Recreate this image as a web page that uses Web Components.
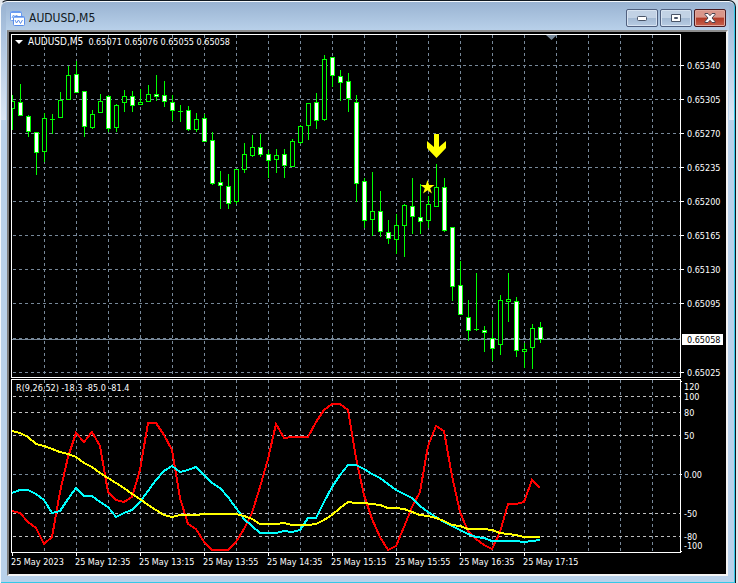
<!DOCTYPE html>
<html lang="en">
<head>
<meta charset="utf-8">
<title>AUDUSD,M5</title>
<style>
    body {
        margin: 0;
        background: #e4e8ec;
        font-family: "DejaVu Sans Condensed", "DejaVu Sans", sans-serif;
    }
</style>
</head>
<body>
<chart-window>
    <span slot="title">AUDUSD,M5</span>
    <market-chart>
        <price-pane slot="price"><span slot="symbol">AUDUSD,M5</span>&nbsp; 0.65071 0.65076 0.65055 0.65058</price-pane>
        <price-axis slot="price-axis" current="0.65058"></price-axis>
        <oscillator-pane slot="oscillator">R(9,26,52) -18.3 -85.0 -81.4</oscillator-pane>
        <oscillator-axis slot="oscillator-axis"></oscillator-axis>
        <time-axis slot="time"></time-axis>
    </market-chart>
</chart-window>

<script>
const STEP = 8;
const GRID = "#778899";
const LEVEL = "#c0c0c0";

// kind (f = falling, r = rising, d = flat), high, body top, body bottom, low
const CANDLES = [
    "r 60 66 74 95", "f 49 67 81 81", "f 80 81 97 102", "f 97 97 118 140", "r 78 83 117 127",
    "d 79 84 85 99", "r 57 65 83 83", "r 31 40 65 65", "f 26 39 58 58", "f 56 56 92 102",
    "r 75 79 93 94", "r 59 66 78 78", "f 60 61 94 97", "r 69 70 93 97", "r 55 61 68 77",
    "f 56 61 71 77", "r 54 67 70 70", "r 50 59 67 67", "f 40 59 62 66", "f 46 60 67 72",
    "f 60 67 76 86", "d 70 76 77 87", "f 71 75 95 96", "r 78 84 95 97", "f 79 83 107 107",
    "f 97 105 149 150", "f 136 147 151 174", "f 139 151 169 174", "r 134 134 167 169", "r 108 119 135 138",
    "r 100 112 121 122", "f 99 112 120 122", "f 115 119 126 143", "r 114 120 125 138", "f 114 119 131 143",
    "r 104 106 132 132", "r 90 91 108 109", "r 68 68 91 105", "f 58 67 86 94", "r 20 24 85 86",
    "f 22 22 41 52", "f 35 41 48 66", "f 38 46 64 77", "f 60 67 149 167", "f 143 146 186 193",
    "r 137 176 185 201", "f 156 176 197 202", "f 185 197 204 209", "r 179 190 205 219", "r 169 170 191 222",
    "f 143 171 182 199", "f 149 182 187 199", "r 161 169 186 193", "r 129 152 172 172", "f 143 152 196 197",
    "f 192 192 252 266", "f 226 250 280 280", "f 265 282 296 306", "d 238 294 295 296", "f 291 295 298 317",
    "f 285 303 314 326", "r 260 265 310 320", "r 238 264 267 287", "f 262 266 316 322", "r 308 314 317 333",
    "r 289 293 313 334", "f 287 292 305 308"
];

const LINES = [
    ["#ff0000", [131, 133, 142, 148, 164, 157, 112, 77, 53, 62, 52, 66, 112, 120, 122, 117, 90, 43, 43, 55, 70, 118, 144, 149,
        162, 170, 170, 170, 162, 149, 133, 107, 79, 44, 58, 57, 57, 57, 42, 30, 24, 24, 30, 78, 115, 139, 157, 170, 166,
        147, 127, 112, 66, 46, 51, 96, 132, 151, 159, 165, 169, 152, 124, 124, 122, 100, 108]],
    ["#00ffff", [113, 110, 110, 114, 120, 133, 131, 119, 108, 116, 116, 122, 127, 137, 133, 130, 122, 111, 100, 91, 86, 92, 90, 87,
        95, 103, 108, 117, 128, 139, 146, 153, 153, 153, 151, 152, 150, 138, 138, 122, 107, 95, 85, 85, 89, 94, 98, 104, 110,
        114, 118, 126, 132, 137, 142, 146, 150, 154, 157, 158, 161, 161, 161, 161, 162, 161, 160]],
    ["#ffff00", [51, 53, 57, 64, 66, 69, 72, 74, 77, 83, 87, 93, 98, 103, 108, 114, 119, 125, 130, 135, 137, 135, 135, 135,
        134, 134, 134, 134, 134, 136, 139, 144, 144, 144, 143, 145, 145, 145, 144, 140, 135, 128, 122, 123, 123, 124, 125, 128,
        128, 129, 132, 135, 136, 138, 141, 145, 146, 149, 149, 149, 150, 153, 154, 155, 157, 157, 157]]
];

function hline(y, color) {
    return `<line x1="0" x2="100%" y1="${y + .5}" y2="${y + .5}" stroke="${color}" stroke-dasharray="3 3" stroke-dashoffset="-1"/>`;
}

function vlines() {
    let out = "";
    for (let i = 1; i < 80; i++) {
        const x = i * 32 + .5;
        out += `<line x1="${x}" x2="${x}" y1="0" y2="100%" stroke="${GRID}" stroke-dasharray="3 3"/>`;
    }
    return out;
}

class ChartWindow extends HTMLElement {
    constructor() {
        super();
        this.attachShadow({ mode: "open" });
        this.shadowRoot.innerHTML = this._getTemplate();
    }

    _getTemplate() {
        return `
        <style>
            :host {
                display: flex;
                flex-direction: column;
                box-sizing: border-box;
                min-height: 100vh;
                margin-right: 2px;
                padding: 0 7px 7px 6px;
                border: 1px solid #101820;
                border-left-color: #f4f8fc;
                border-radius: 7px 7px 0 0;
                box-shadow: inset -1px -1px 0 #35c8e8, inset 0 1px 0 #f4f8fc;
                background:
                    linear-gradient(#98b2d1, #aac2de 30px, #dbe7f4 119px) left top / 5px 119px no-repeat,
                    linear-gradient(#98b2d1, #aac2de 30px, #dbe7f4 119px) right 1px top / 5px 119px no-repeat,
                    linear-gradient(#98b2d1, #b9d1ea 30px) #b9d1ea;
            }

            header {
                display: flex;
                align-items: center;
                gap: 4px;
                height: 29px;
                padding: 5px 2px 0 3px;
                box-sizing: border-box;
            }

            h1 {
                flex: 1;
                margin: 0;
                font-size: 12px;
                font-weight: normal;
                line-height: 16px;
                color: #101820;
            }

            nav {
                display: flex;
                gap: 2px;
            }

            button {
                display: grid;
                place-items: center;
                width: 32px;
                height: 18px;
                padding: 0;
                border: 1px solid #50607f;
                border-radius: 2px;
                box-shadow: inset 0 0 0 1px #d7e3f1;
                background: linear-gradient(#c2d2e5 50%, #a3b9d3 50%, #b8cce3);
            }

            button.close {
                border-color: #4a1a20;
                box-shadow: inset 0 0 0 1px #e0a79c;
                background: linear-gradient(#d9968a 45%, #b13a26 50%, #c8614d);
            }

            .client {
                flex: 1;
                display: flex;
                border: solid;
                border-width: 2px;
                border-color: #8c8c8c #f4f4f4 #f4f4f4 #7c7c7c;
            }

            ::slotted(market-chart) {
                flex: 1;
            }
        </style>

        <header>
            <svg width="15" height="15" viewBox="0 0 15 15" aria-hidden="true">
                <rect x=".5" y=".5" width="11" height="9" rx="1" fill="#fff" stroke="#6a9cf0"/>
                <path d="M1 1.500h10" stroke="#6c9cf0"/>
                <path d="M2 7l1.500-3 1.500 2 1.500-2 1.500 2" fill="none" stroke="#6a9cf0"/>
                <rect x="3.500" y="5.500" width="11" height="9" rx="1" fill="#fff" stroke="#5a8eea"/>
                <path d="M4 6.500h10" stroke="#8db4f6"/>
                <path d="M5 9l1.500 3 2-3 2 3.500 2-3.500" fill="none" stroke="#5a8eea"/>
            </svg>
            <h1><slot name="title"></slot></h1>
            <nav>
                <button type="button" aria-label="Minimize">
                    <svg width="12" height="6" viewBox="0 0 12 6"><rect x="1.500" y="1.500" width="9" height="4" rx="1" fill="#fff" stroke="#4a5568"/></svg>
                </button>
                <button type="button" aria-label="Maximize">
                    <svg width="12" height="10" viewBox="0 0 12 10"><path d="M1.500 1.500h9v7h-9zM4.500 4.500h3v1h-3z" fill="#fff" fill-rule="evenodd" stroke="#4a5568"/></svg>
                </button>
                <button type="button" class="close" aria-label="Close">
                    <svg width="12" height="10" viewBox="0 0 12 10"><path d="M1 .5h3l2 2.200 2-2.200h3v1l-3 3.500 3 3.500v1h-3l-2-2.200-2 2.200h-3v-1l3-3.500-3-3.500z" fill="#fff" stroke="#4a4450"/></svg>
                </button>
            </nav>
        </header>
        <div class="client"><slot></slot></div>
        `;
    }
}

class MarketChart extends HTMLElement {
    constructor() {
        super();
        this.attachShadow({ mode: "open" });
        this.shadowRoot.innerHTML = `
        <style>
            :host {
                display: grid;
                grid-template-columns: minmax(0, 1fr) 45px;
                grid-template-rows: minmax(344px, 1fr) 174px 20px;
                row-gap: 1px;
                padding: 2px 0 0 2px;
                background: #000;
                color: #fff;
                font-size: 9px;
                line-height: 12px;
            }
        </style>
        <slot name="price"></slot>
        <slot name="price-axis"></slot>
        <slot name="oscillator"></slot>
        <slot name="oscillator-axis"></slot>
        <slot name="time"></slot>
        `;
    }
}

const PANE_STYLE = `
    :host {
        display: grid;
        border: 1px solid #fff;
        overflow: hidden;
    }

    svg, .caption {
        grid-area: 1 / 1;
    }

    svg {
        width: 100%;
        height: 100%;
    }

    .caption {
        align-self: start;
        white-space: nowrap;
        z-index: 1;
    }
`;

const AXIS_STYLE = `
    :host {
        display: grid;
    }

    svg {
        width: 100%;
        height: 100%;
        overflow: visible;
    }

    text {
        fill: #fff;
        font-size: 9px;
    }
`;

class PricePane extends HTMLElement {
    constructor() {
        super();
        this.attachShadow({ mode: "open" });
        this.shadowRoot.innerHTML = this._getTemplate();
    }

    _getCandles() {
        return CANDLES.map((row, i) => {
            const [kind, ...values] = row.split(" ");
            const [high, top, bottom, low] = values.map(Number);
            const x = i * STEP;
            const wick = `<path d="M${x + .5} ${high}V${top}M${x + .5} ${bottom}V${low}" stroke="#0f0"/>`;
            if (kind === "d") {
                return `<rect x="${x}" y="${high}" width="1" height="${low - high}" fill="#0f0"/>
                    <rect x="${x - 2}" y="${top}" width="5" height="1" fill="#0f0"/>`;
            }
            const fill = kind === "f" ? "#fff" : "#000";
            return wick + `<rect x="${x - 1.5}" y="${top + .5}" width="4" height="${bottom - top - 1}" fill="${fill}" stroke="#0f0"/>`;
        }).join("");
    }

    _getTemplate() {
        return `
        <style>
            ${PANE_STYLE}
            .caption {
                display: flex;
                align-items: center;
                gap: 5px;
                padding: 1px 3px;
            }

            .caption svg {
                width: 8px;
                height: 4px;
            }

            ::slotted([slot="symbol"]) {
                font-size: 10px;
            }
        </style>
        <div class="caption">
            <svg viewBox="0 0 8 4"><path d="M0 0h8l-4 4z" fill="#fff"/></svg>
            <span><slot name="symbol"></slot><slot></slot></span>
        </div>
        <svg>
            ${vlines()}
            ${[30, 64, 98, 132, 166, 200, 234, 268, 303, 337].map(y => hline(y, GRID)).join("")}
            <rect y="304" width="100%" height="1" fill="${GRID}"/>
            ${this._getCandles()}
            <path d="M534 0h11l-5.500 5z" fill="${GRID}"/>
            <path d="M422 99h5v13l7-6v7l-9.500 10-9.500-10v-7l7 6z" fill="#ff0"/>
            <path d="M415.500 145l1.600 5h5.400l-4.300 3.200 1.700 5.300-4.400-3.200-4.400 3.200 1.700-5.300-4.300-3.200h5.400z" fill="#ff0"/>
        </svg>
        `;
    }
}

class PriceAxis extends HTMLElement {
    constructor() {
        super();
        this.attachShadow({ mode: "open" });
        this.shadowRoot.innerHTML = this._getTemplate();
    }

    _getTemplate() {
        const rows = [31, 65, 99, 133, 167, 201, 235, 269, null, 338];
        const labels = rows.map((y, i) => {
            if (y === null) return "";
            const price = ((65340 - i * 35) / 100000).toFixed(5);
            return `<rect y="${y}" width="3" height="1" fill="#fff"/><text x="6" y="${y + 4}">${price}</text>`;
        });
        return `
        <style>${AXIS_STYLE}</style>
        <svg>
            ${labels.join("")}
            <rect x="1" y="300" width="41" height="11" fill="#fff"/>
            <text x="6" y="309" style="fill: #000">${this.getAttribute("current")}</text>
        </svg>
        `;
    }
}

class OscillatorPane extends HTMLElement {
    constructor() {
        super();
        this.attachShadow({ mode: "open" });
        this.shadowRoot.innerHTML = this._getTemplate();
    }

    _getTemplate() {
        const lines = LINES.map(([color, values]) => {
            const points = values.map((y, i) => `${i * STEP},${y}`).join(" ");
            return `<polyline points="${points}" fill="none" stroke="${color}" stroke-width="2" shape-rendering="crispEdges"/>`;
        });
        return `
        <style>
            ${PANE_STYLE}
            .caption {
                padding: 2px 4px;
            }
        </style>
        <div class="caption"><slot></slot></div>
        <svg>
            ${vlines()}
            ${[16, 32, 55, 133, 156].map(y => hline(y, LEVEL)).join("")}
            ${hline(94, GRID)}
            ${lines.join("")}
        </svg>
        `;
    }
}

class OscillatorAxis extends HTMLElement {
    constructor() {
        super();
        this.attachShadow({ mode: "open" });
        this.shadowRoot.innerHTML = this._getTemplate();
    }

    _getTemplate() {
        const labels = [["120", 7], ["100", 17], ["80", 33], ["50", 56], ["0.00", 95], ["-50", 134], ["-80", 157], ["-100", 166]];
        return `
        <style>${AXIS_STYLE}</style>
        <svg>
            ${[2, 95, 172].map(y => `<rect y="${y}" width="1" height="1" fill="#fff"/>`).join("")}
            ${labels.map(([text, y]) => `<text x="3" y="${y + 4}">${text}</text>`).join("")}
        </svg>
        `;
    }
}

class TimeAxis extends HTMLElement {
    constructor() {
        super();
        this.attachShadow({ mode: "open" });
        this.shadowRoot.innerHTML = this._getTemplate();
    }

    _getTemplate() {
        const times = ["2023", "12:35", "13:15", "13:55", "14:35", "15:15", "15:55", "16:35", "17:15"];
        return `
        <style>
            :host {
                display: flex;
                grid-column: 1 / -1;
                margin-top: -1px;
                white-space: nowrap;
            }

            span {
                width: 64px;
            }

            span::before {
                content: "";
                display: block;
                width: 1px;
                height: 3px;
                margin-left: 1px;
                background: #fff;
            }
        </style>
        ${times.map(time => `<span>25 May ${time}</span>`).join("")}
        `;
    }
}

customElements.define("chart-window", ChartWindow);
customElements.define("market-chart", MarketChart);
customElements.define("price-pane", PricePane);
customElements.define("price-axis", PriceAxis);
customElements.define("oscillator-pane", OscillatorPane);
customElements.define("oscillator-axis", OscillatorAxis);
customElements.define("time-axis", TimeAxis);
</script>
</body>
</html>
